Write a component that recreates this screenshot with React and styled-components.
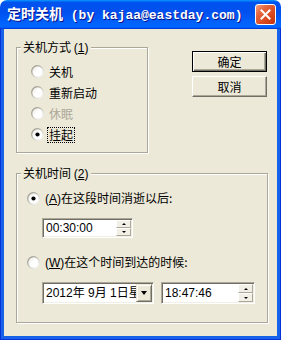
import React from 'react';
import styled, { createGlobalStyle } from 'styled-components';

const Global = createGlobalStyle`
  html, body { margin: 0; padding: 0; background: #ffffff; }
  body {
    font-family: "Liberation Sans", "Noto Sans CJK SC", sans-serif;
    font-size: 12px;
    color: #000;
  }
  #root { width: 281px; height: 340px; }
`;

const Window = styled.div`
  width: 281px;
  height: 340px;
  display: flex;
  flex-direction: column;
`;

const TitleBar = styled.div`
  height: 29px;
  flex: none;
  display: flex;
  align-items: center;
  padding: 0 5px 0 7px;
  border-radius: 7px 7px 0 0;
  background: linear-gradient(180deg, #0997ff, #0053ee 8%, #0050ee 40%, #0066ff 88%, #0066ff 93%, #005bff 95%, #003dd7 96%, #003dd7);
  box-sizing: border-box;
`;

const Title = styled.div`
  flex: 1;
  color: #fff;
  font-family: "Liberation Mono", "Noto Sans CJK SC", monospace;
  font-weight: bold;
  font-size: 13px;
  letter-spacing: 0;
  white-space: nowrap;
  text-shadow: 1px 1px 0 #0f1089;
  line-height: 16px;
`;

const TitleCJK = styled.span`
  font-family: "Noto Sans CJK SC", sans-serif;
  font-size: 14px;
`;

const CloseButton = styled.div`
  width: 21px;
  height: 21px;
  box-sizing: border-box;
  border: 1px solid #fff;
  border-radius: 3px;
  background: linear-gradient(135deg, #f3a184 0%, #e7673f 30%, #d8451c 70%, #c0350f 100%);
  display: flex;
  align-items: center;
  justify-content: center;
`;

const Frame = styled.div`
  flex: 1;
  display: flex;
  background: #0831d9;
  padding: 0 1px 1px;
`;

const Client = styled.div`
  flex: 1;
  background: #ece9d8;
  border: solid #1663ea;
  border-width: 0 3px 3px;
  padding: 18px 0 0 12px;
  display: flex;
  flex-direction: column;
`;

const TopRow = styled.div`
  display: flex;
  align-items: flex-start;
`;

const Group = styled.div`
  position: relative;
  box-sizing: border-box;
  width: ${p => p.$w}px;
  height: ${p => p.$h}px;
  border: 1px solid #aca899;
  box-shadow: inset 1px 1px 0 #fff, 1px 1px 0 #fff;
  padding: ${p => p.$pad};
  display: flex;
  flex-direction: column;
`;

const Legend = styled.span`
  position: absolute;
  left: 4px;
  top: -8px;
  padding: 0 3px 0 2px;
  background: #ece9d8;
  line-height: 14px;
  font-family: "Noto Sans CJK SC", sans-serif;
  font-size: 12px;
  white-space: nowrap;
`;

const Row = styled.div`
  display: flex;
  align-items: center;
  height: ${p => p.$h}px;
  gap: 4px;
  margin-top: ${p => p.$mt || 0}px;
`;

const Label = styled.span`
  line-height: 14px;
  font-family: "Noto Sans CJK SC", sans-serif;
  font-size: 12px;
  white-space: nowrap;
  color: ${p => (p.$disabled ? '#aca899' : '#000')};
  border: 1px ${p => (p.$focus ? 'dotted #000' : 'solid transparent')};
  padding: 0 1px;
  margin-left: -1px;
`;

const Mnemonic = styled.span`
  font-family: "Liberation Sans", sans-serif;
`;

const ButtonCol = styled.div`
  display: flex;
  flex-direction: column;
  gap: 4px;
  margin-left: 44px;
  margin-top: 4px;
`;

const PushButton = styled.div`
  width: 75px;
  height: 21px;
  box-sizing: border-box;
  display: flex;
  align-items: center;
  justify-content: center;
  background: #ece9d8;
  font-family: "Noto Sans CJK SC", sans-serif;
  font-size: 12px;
  border: 1px solid;
  border-color: ${p => (p.$default ? '#000' : '#fff #716f64 #716f64 #fff')};
  box-shadow: ${p =>
    p.$default
      ? 'inset 1px 1px 0 #fff, inset -1px -1px 0 #716f64, inset -2px -2px 0 #aca899'
      : 'inset -1px -1px 0 #aca899'};
`;

const Field = styled.div`
  display: flex;
  box-sizing: border-box;
  width: ${p => p.$w}px;
  height: ${p => p.$h}px;
  background: #fff;
  border: 1px solid;
  border-color: #aca899 #fff #fff #aca899;
  box-shadow: inset 1px 1px 0 #716f64, inset -1px -1px 0 #f1efe2;
  padding: 1px;
  margin-left: ${p => p.$ml || 0}px;
  margin-top: ${p => p.$mt || 0}px;
`;

const FieldText = styled.div`
  flex: 1;
  overflow: hidden;
  white-space: nowrap;
  display: flex;
  align-items: center;
  padding-left: 2px;
  font-family: "Liberation Sans", "Noto Sans CJK SC", sans-serif;
  font-size: 12px;
  line-height: 14px;
`;

const Spin = styled.div`
  width: 15px;
  display: flex;
  flex-direction: column;
`;

const SpinHalf = styled.div`
  flex: 1;
  box-sizing: border-box;
  background: #f1efe6;
  border: 1px solid;
  border-color: #fff #aca899 #aca899 #fff;
  display: flex;
  align-items: center;
  justify-content: center;
`;

const Tri = styled.span`
  width: 0;
  height: 0;
  border-left: ${p => p.$s}px solid transparent;
  border-right: ${p => p.$s}px solid transparent;
  ${p => (p.$up ? `border-bottom: ${p.$t}px solid #000;` : `border-top: ${p.$t}px solid #000;`)}
`;

const DropButton = styled.div`
  width: 16px;
  box-sizing: border-box;
  background: #ece9d8;
  border: 1px solid;
  border-color: #ece9d8 #716f64 #716f64 #ece9d8;
  box-shadow: inset 1px 1px 0 #fff, inset -1px -1px 0 #aca899;
  display: flex;
  align-items: center;
  justify-content: center;
`;

const DateRow = styled.div`
  display: flex;
  gap: 7px;
  margin-left: 15px;
  margin-top: 10px;
`;

const Radio = ({ checked }) => (
  <svg width="13" height="13" viewBox="0 0 13 13" style={{ flex: 'none' }}>
    <defs>
      <linearGradient id="rg" x1="0" y1="0" x2="1" y2="1">
        <stop offset="0" stopColor="#8c8a80" />
        <stop offset="0.5" stopColor="#c9c7bc" />
        <stop offset="1" stopColor="#ffffff" />
      </linearGradient>
      <linearGradient id="rf" x1="0" y1="0" x2="1" y2="1">
        <stop offset="0" stopColor="#e2e0d6" />
        <stop offset="0.45" stopColor="#ffffff" />
        <stop offset="1" stopColor="#ffffff" />
      </linearGradient>
    </defs>
    <circle cx="6.5" cy="6.5" r="5.8" fill="url(#rf)" stroke="url(#rg)" strokeWidth="1.3" />
    {checked && <circle cx="6.5" cy="6.5" r="2.1" fill="#000" />}
  </svg>
);

const RadioRow = ({ checked, h, mt, children, disabled, focus }) => (
  <Row $h={h} $mt={mt}>
    <Radio checked={checked} />
    <Label $disabled={disabled} $focus={focus}>{children}</Label>
  </Row>
);

const SpinButtons = () => (
  <Spin>
    <SpinHalf><Tri $up $s={2} $t={2} /></SpinHalf>
    <SpinHalf><Tri $s={2} $t={2} /></SpinHalf>
  </Spin>
);

export default function App() {
  return (
    <>
      <Global />
      <Window>
        <TitleBar>
          <Title>
            <TitleCJK>定时关机</TitleCJK> (by kajaa@eastday.com)
          </Title>
          <CloseButton>
            <svg width="11" height="11" viewBox="0 0 11 11">
              <path d="M1.5 1.5 L9.5 9.5 M9.5 1.5 L1.5 9.5" stroke="#fff" strokeWidth="2" strokeLinecap="square" />
            </svg>
          </CloseButton>
        </TitleBar>
        <Frame>
          <Client>
            <TopRow>
              <Group $w={132} $h={106} $pad="13px 0 0 14px">
                <Legend>关机方式 <Mnemonic>(<u>1</u>)</Mnemonic></Legend>
                <RadioRow h={21}>关机</RadioRow>
                <RadioRow h={21}>重新启动</RadioRow>
                <RadioRow h={21} disabled>休眠</RadioRow>
                <RadioRow h={21} checked focus>挂起</RadioRow>
              </Group>
              <ButtonCol>
                <PushButton $default>确定</PushButton>
                <PushButton>取消</PushButton>
              </ButtonCol>
            </TopRow>
            <Group $w={252} $h={150} $pad="14px 0 0 10px" style={{ marginTop: 20 }}>
              <Legend>关机时间 <Mnemonic>(<u>2</u>)</Mnemonic></Legend>
              <RadioRow h={20} checked>
                <Mnemonic>(<u>A</u>)</Mnemonic>在这段时间消逝以后:
              </RadioRow>
              <Field $w={91} $h={20} $ml={15} $mt={10}>
                <FieldText>00:30:00</FieldText>
                <SpinButtons />
              </Field>
              <RadioRow h={20} mt={14}>
                <Mnemonic>(<u>W</u>)</Mnemonic>在这个时间到达的时候:
              </RadioRow>
              <DateRow>
                <Field $w={112} $h={22}>
                  <FieldText>2012年 9月 1日星期六</FieldText>
                  <DropButton><Tri $s={3.5} $t={4} /></DropButton>
                </Field>
                <Field $w={94} $h={22}>
                  <FieldText>18:47:46</FieldText>
                  <SpinButtons />
                </Field>
              </DateRow>
            </Group>
          </Client>
        </Frame>
      </Window>
    </>
  );
}
